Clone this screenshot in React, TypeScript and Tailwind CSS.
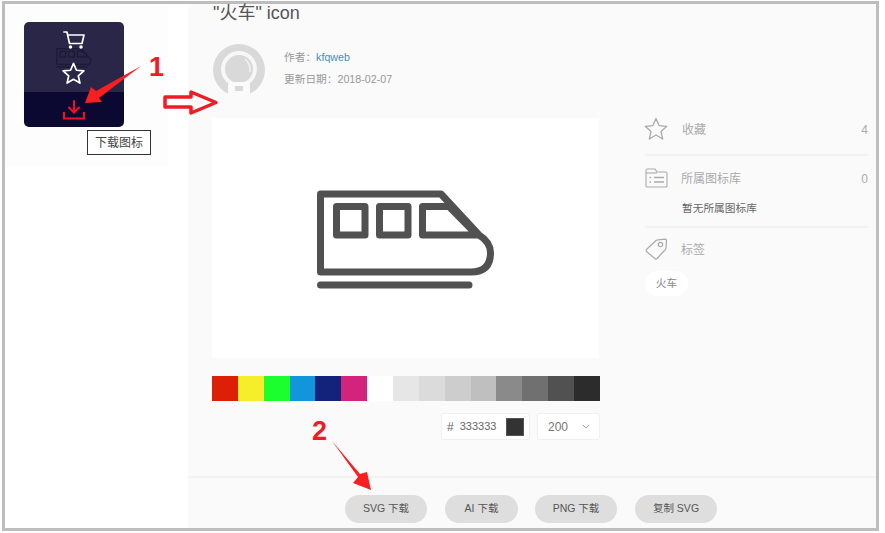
import React from "react";

const swatches = ["#dd1f07", "#f7ee2b", "#1bff2c", "#1296db", "#13227a", "#d4237a", "#ffffff", "#e6e6e6", "#dbdbdb", "#cdcdcd", "#bfbfbf", "#8a8a8a", "#707070", "#515151", "#2c2c2c"];

function Train({ className, stroke }: { className: string; stroke: string }) {
  return (
    <svg viewBox="0 0 178 100" className={className} fill="none" stroke={stroke} strokeWidth="7" strokeLinejoin="round" strokeLinecap="round">
      <path d="M3.5 4H124L162 45Q173.5 52 173.5 63Q173.5 82 154 82H3.5Z" />
      <path d="M19.5 16.5H48V45H19.5Z" />
      <path d="M62.5 16.5H91V45H62.5Z" />
      <path d="M105.5 16.5H132L160 45H105.5Z" />
      <path d="M3.5 95H152" />
    </svg>
  );
}

function StarIcon({ className, stroke, width }: { className: string; stroke: string; width: number }) {
  return (
    <svg viewBox="0 0 24 24" className={className} fill="none" stroke={stroke} strokeWidth={width} strokeLinejoin="round">
      <path d="M12 1.5L15.1 8.6L22.8 9.3L17 14.4L18.7 22L12 18L5.3 22L7 14.4L1.2 9.3L8.9 8.6Z" />
    </svg>
  );
}

function Btn({ label, w, ml }: { label: string; w: string; ml: string }) {
  return (
    <div className={`${w} ${ml} h-[28px] rounded-full bg-[#dedede] flex items-center justify-center text-[10.5px] text-[#555]`}>
      {label}
    </div>
  );
}

export default function App() {
  return (
    <div className="relative w-[885px] h-[533px] bg-white pl-[2px] pt-[1px] overflow-hidden [font-family:'Liberation_Sans','Noto_Sans_CJK_SC',sans-serif]">
      <div className="w-[877px] h-[530px] border-[3px] border-[#bdbdbd] flex">
        {/* left thumbnail */}
        <div className="w-[183px] shrink-0">
          <div className="relative w-[163px] h-[163px] bg-[#fdfdfd] pl-[19px] pt-[18px]">
            <div className="w-[100px] h-[105px] rounded-[5px] overflow-hidden flex flex-col">
              <div className="relative h-[70px] bg-[#2a2648] flex flex-col items-center pt-[9px]">
                <Train className="absolute left-[32px] top-[26px] w-[36px] h-[20px]" stroke="#1d1a38" />
                <svg viewBox="0 0 22 18" className="relative w-[22px] h-[18px] ml-[-1px]" fill="none" stroke="#fff" strokeWidth="1.7" strokeLinejoin="round" strokeLinecap="round">
                  <path d="M0.8 1H4L6.5 12.5H19L21 4H4.8" />
                  <circle cx="7.5" cy="16" r="0.9" />
                  <circle cx="18" cy="16" r="0.9" />
                </svg>
                <StarIcon className="relative w-[23px] h-[23px] mt-[13px] ml-[-1px]" stroke="#fff" width={1.8} />
              </div>
              <div className="h-[35px] bg-[#0b0932] flex items-center justify-center pt-[1px]">
                <svg viewBox="0 0 22 20" className="w-[22px] h-[20px] ml-[-1px]" fill="none" stroke="#f5101f" strokeWidth="2" strokeLinecap="round">
                  <path d="M11 1V12M6 7.5L11 12.5L16 7.5" />
                  <path d="M1 12V18.5H21V12" strokeLinecap="butt" />
                </svg>
              </div>
            </div>
            <div className="absolute left-[82px] top-[126px] w-[64px] h-[25px] bg-white border border-[#333] flex items-center justify-center text-[12px] text-[#444]">
              下载图标
            </div>
          </div>
        </div>

        {/* main */}
        <div className="flex-1 min-w-0 bg-[#fafafa] flex flex-col">
          <div className="flex-1 flex pl-[24px]">
            <div className="w-[388px] shrink-0">
              <div className="h-[18px] leading-[18px] text-[18px] text-[#555] ml-[1px]">"火车" icon</div>
              <div className="flex mt-[22px] ml-[1px] h-[52px]">
                <svg viewBox="0 0 52 52" className="w-[52px] h-[52px] shrink-0">
                  <circle cx="26" cy="26" r="26" fill="#d9d9d9" />
                  <circle cx="26" cy="25" r="16" fill="#d9d9d9" stroke="#f7f7f7" strokeWidth="4" />
                  <path d="M32 15Q38 20 37 28" fill="none" stroke="#f2f2f2" strokeWidth="1.5" />
                  <path d="M15 52V42Q15 38 19 38H33Q37 38 37 42V52Z" fill="#fafafa" />
                  <rect x="22" y="42" width="8" height="5" fill="#d9d9d9" />
                </svg>
                <div className="ml-[19px] flex flex-col text-[10.7px] text-[#999] leading-[14px] pt-[6px] gap-[8px]">
                  <div>作者：<span className="text-[#4a8db8]">kfqweb</span></div>
                  <div>更新日期：2018-02-07</div>
                </div>
              </div>
              <div className="mt-[22px] w-[387px] h-[240px] bg-white flex items-center justify-center pt-[4px]">
                <Train className="w-[178px] h-[100px]" stroke="#515151" />
              </div>
              <div className="mt-[18px] flex h-[25px] w-[388px]">
                {swatches.map((c) => (
                  <div key={c} className="flex-1" style={{ backgroundColor: c }} />
                ))}
              </div>
              <div className="mt-[12px] flex justify-end gap-[7px]">
                <div className="w-[89px] h-[27px] bg-white border border-[#f0f0f0] rounded-[3px] flex items-center pl-[5px] text-[11px] text-[#666]">
                  <span className="text-[12px] mr-[6px]">#</span>
                  <span>333333</span>
                  <span className="ml-[10px] w-[18px] h-[18px] bg-[#333] border border-[#555]" />
                </div>
                <div className="w-[63px] h-[27px] bg-white border border-[#f0f0f0] rounded-[3px] flex items-center pl-[10px] text-[12px] text-[#777]">
                  <span>200</span>
                  <svg viewBox="0 0 10 6" className="w-[8px] h-[5px] ml-[14px]" fill="none" stroke="#888" strokeWidth="1">
                    <path d="M1 1L5 5L9 1" />
                  </svg>
                </div>
              </div>
            </div>

            <div className="ml-[45px] w-[223px] pt-[114px] text-[12px] text-[#aaa]">
              <div className="flex items-center h-[21px]">
                <StarIcon className="w-[24px] h-[24px] ml-[-1px] shrink-0" stroke="#aaa" width={1.3} />
                <span className="ml-[14px] flex-1 pt-[2px]">收藏</span>
                <span className="pt-[2px]">4</span>
              </div>
              <div className="mt-[15px] border-t-2 border-[#f2f2f2]" />
              <div className="flex items-center h-[22px] mt-[11px]">
                <svg viewBox="0 0 23 20" className="w-[23px] h-[20px] shrink-0" fill="none" stroke="#aaa" strokeWidth="1.1">
                  <path d="M1 18V2.5Q1 1 2.5 1H10L12 4H20.5Q22 4 22 5.5V18Q22 19 21 19H2Q1 19 1 18Z" />
                  <path d="M1 5H12" />
                  <path d="M4.5 9.5H6M4.5 14H6M9 9.5H19M9 14H19" strokeWidth="1.3" />
                </svg>
                <span className="ml-[13px] flex-1 pt-[2px]">所属图标库</span>
                <span className="pt-[2px]">0</span>
              </div>
              <div className="mt-[12px] ml-[37px] text-[10.7px] leading-[14px] text-[#666]">暂无所属图标库</div>
              <div className="mt-[11px] border-t-2 border-[#f2f2f2]" />
              <div className="flex items-center h-[22px] mt-[10px]">
                <svg viewBox="0 0 23 22" className="w-[23px] h-[22px] shrink-0" fill="none" stroke="#aaa" strokeWidth="1.2" strokeLinejoin="round">
                  <path d="M1.5 11.5L11 2.5Q11.8 1.8 13 1.8L20 1.2Q21.5 1.2 21.5 2.8L21 10Q21 11 20 12L12 20.5Q10.8 21.5 9.8 20.5L1.5 13.5Q0.8 12.5 1.5 11.5Z" />
                  <circle cx="15.5" cy="6.5" r="2.2" />
                </svg>
                <span className="ml-[13px] pt-[2px]">标签</span>
              </div>
              <div className="mt-[11px] w-[43px] h-[25px] rounded-full bg-white flex items-center justify-center text-[10.7px] text-[#888]">火车</div>
            </div>
          </div>

          <div className="h-[52px] border-t-2 border-[#f3f3f3] flex pt-[17px] pl-[157px]">
            <Btn label="SVG 下载" w="w-[82px]" ml="ml-0" />
            <Btn label="AI 下载" w="w-[73px]" ml="ml-[18px]" />
            <Btn label="PNG 下载" w="w-[82px]" ml="ml-[17px]" />
            <Btn label="复制 SVG" w="w-[82px]" ml="ml-[18px]" />
          </div>
        </div>
      </div>

      {/* annotations drawn over the screenshot */}
      <svg viewBox="0 0 885 533" className="absolute left-0 top-0 w-[885px] h-[533px] pointer-events-none">
        <polygon points="141,66 96,91 91,87 85,103 102,102 99,98" fill="#f5201f" />
        <path d="M165 97H191V92L216 102.5L191 113V107H165Z" fill="none" stroke="#ee1c25" strokeWidth="3.5" strokeLinejoin="round" />
        <polygon points="332,441 360,474 367,472 371,490 353,483 358,477" fill="#f5201f" />
      </svg>
      <span className="absolute left-[149px] top-[51px] text-[27px] leading-[32px] font-bold text-[#ee1c25]">1</span>
      <span className="absolute left-[312px] top-[415px] text-[27px] leading-[32px] font-bold text-[#ee1c25]">2</span>
    </div>
  );
}
